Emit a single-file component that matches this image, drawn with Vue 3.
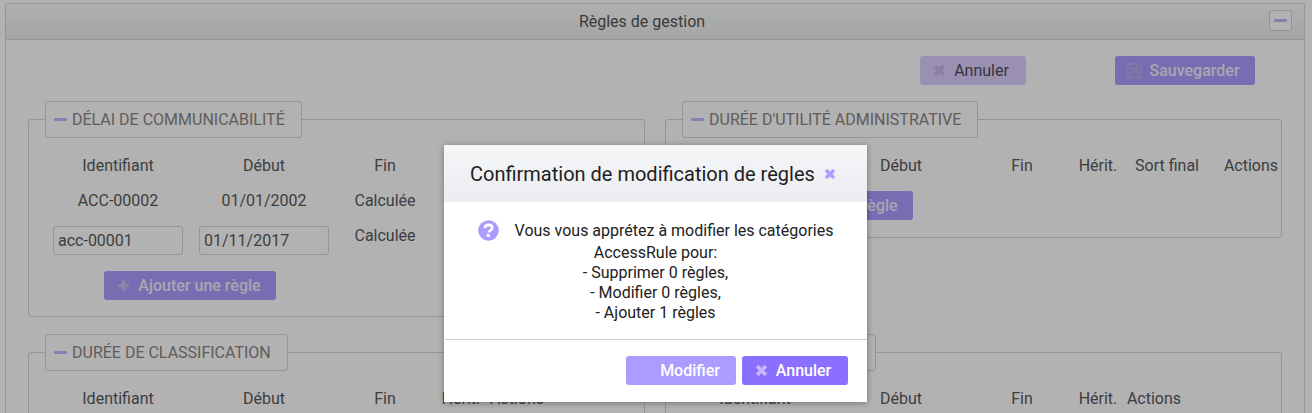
<script setup>
const leftCols = ['Identifiant', 'Début', 'Fin', 'Hérit.', 'Actions']
const dialogLines = ['AccessRule pour:', '- Supprimer 0 règles,', '- Modifier 0 règles,', '- Ajouter 1 règles']
</script>

<template>
  <div class="page">
    <section class="panel">
      <header class="panel-head">
        <span class="panel-title">Règles de gestion</span>
        <button class="collapse"><span class="dash"></span></button>
      </header>
      <div class="panel-body">
        <div class="toolbar">
          <button class="btn btn-soft">
            <svg class="ic" viewBox="0 0 12 12"><path d="M2 2l8 8M10 2l-8 8" /></svg>
            <span>Annuler</span>
          </button>
          <button class="btn btn-off btn-save">
            <svg class="floppy" viewBox="0 0 16 16"><path d="M1 1h11l3 3v11H1z" /><path d="M4 1.500v4.500h7V1.500M3.500 14.500V9h9v5.500" /></svg>
            <span>Sauvegarder</span>
          </button>
        </div>
        <div class="rules">
          <div class="group">
            <div class="legend"><span class="dash"></span>Délai de communicabilité</div>
            <div class="row cols-a head"><span>Identifiant</span><span>Début</span><span>Fin</span></div>
            <div class="row cols-a data"><span>ACC-00002</span><span>01/01/2002</span><span>Calculée</span></div>
            <div class="row cols-a edit">
              <input class="field" value="acc-00001" />
              <input class="field" value="01/11/2017" />
              <span class="calc">Calculée</span>
            </div>
            <div class="add-row cols-add">
              <button class="btn btn-off btn-add">
                <svg class="ic" viewBox="0 0 12 12"><path d="M6 1v10M1 6h10" /></svg>
                <span>Ajouter une règle</span>
              </button>
            </div>
          </div>
          <div class="group group-short">
            <div class="legend"><span class="dash"></span>Durée d'utilité administrative</div>
            <div class="row cols-b head"><span></span><span>Début</span><span>Fin</span><span>Hérit.</span><span>Sort final</span><span>Actions</span></div>
            <div class="add-row add-tight">
              <button class="btn btn-off btn-add">
                <svg class="ic" viewBox="0 0 12 12"><path d="M6 1v10M1 6h10" /></svg>
                <span>Ajouter une règle</span>
              </button>
            </div>
          </div>
          <div class="group">
            <div class="legend"><span class="dash"></span>Durée de classification</div>
            <div class="row cols-a head"><span v-for="c in leftCols" :key="c">{{ c }}</span></div>
          </div>
          <div class="group">
            <div class="legend legend-narrow"><span class="dash"></span>Durée de diffusion</div>
            <div class="row cols-a head"><span v-for="c in leftCols" :key="c">{{ c }}</span></div>
          </div>
        </div>
      </div>
    </section>

    <div class="overlay">
      <div class="dialog">
        <div class="dlg-head">
          <span>Confirmation de modification de règles</span>
          <svg class="dlg-close" viewBox="0 0 12 12"><path d="M2 2l8 8M10 2l-8 8" /></svg>
        </div>
        <div class="dlg-body">
          <p class="first">
            <svg class="help" viewBox="0 0 22 22">
              <circle cx="11" cy="11" r="10.800" fill="#ab9dff" />
              <path d="M7.300 8.600c0-2.200 1.600-3.500 3.800-3.500 2.100 0 3.700 1.300 3.700 3.100 0 1.500-.9 2.300-2 3-.8.500-1.200 1-1.200 2" fill="none" stroke="#fff" stroke-width="2.800" />
              <rect x="9.200" y="14.700" width="3.200" height="3" fill="#fff" />
            </svg>
            <span>Vous vous apprétez à modifier les catégories</span>
          </p>
          <p v-for="l in dialogLines" :key="l">{{ l }}</p>
        </div>
        <div class="dlg-foot">
          <button class="btn dlg-btn dlg-mod">Modifier</button>
          <button class="btn dlg-btn dlg-cancel">
            <svg class="ic" viewBox="0 0 12 12"><path d="M2 2l8 8M10 2l-8 8" /></svg>
            <span>Annuler</span>
          </button>
        </div>
      </div>
    </div>
  </div>
</template>

<style>
html, body { margin: 0; height: 100%; overflow: hidden; background: #fff; }
</style>

<style scoped>
.page {
  position: relative;
  height: 413px;
  overflow: hidden;
  padding: 3px 7px 0 5px;
  box-sizing: border-box;
  font-family: Roboto, "Liberation Sans", sans-serif;
  font-size: 16px;
  color: #5a5a5a;
}
p { margin: 0; }
button { font-family: inherit; }

.panel { border: 1px solid #d4d4d4; border-bottom: 0; border-radius: 3px 3px 0 0; height: 420px; }
.panel-head {
  height: 35px;
  border-bottom: 1px solid #d8d8d8;
  background: linear-gradient(#fbfbfb, #eceded);
  display: flex;
  align-items: center;
  justify-content: center;
  position: relative;
  color: #555;
}
.panel-title { margin-right: 26px; }
.collapse {
  position: absolute;
  right: 12px;
  top: 6px;
  width: 23px;
  height: 21px;
  padding: 0;
  display: flex;
  align-items: center;
  justify-content: center;
  background: #fff;
  border: 1px solid #d2d2d2;
  border-radius: 3px;
}
.dash { display: block; width: 13px; height: 3px; background: #c4b8ff; border-radius: 1px; }

.panel-body { padding: 16px 22px 0 22px; }
.toolbar { display: flex; justify-content: flex-end; padding-right: 27px; gap: 89px; height: 29px; }
.btn {
  display: inline-flex;
  align-items: center;
  justify-content: center;
  box-sizing: border-box;
  height: 29px;
  border: 0;
  border-radius: 3px;
  padding: 0;
  font-size: 16px;
  font-weight: 500;
  color: #fff;
}
.ic { width: 13px; height: 13px; fill: none; stroke: currentColor; stroke-width: 3.400; margin-right: 8px; }
.btn-soft { width: 106px; padding-right: 4px; background: #ddd0ff; color: #4f4b5c; font-weight: 400; }
.btn-soft .ic { color: #c5b8f0; }
.btn-off { background: #ab9dff; color: #f2eefc; }
.btn-off .ic { color: #c6bcf5; }
.btn-save { width: 140px; padding-right: 4px; }
.floppy { width: 16px; height: 16px; margin-right: 7px; fill: none; stroke: #bdb2f0; stroke-width: 1.300; }
.btn-add { width: 172px; padding-right: 2px; }

.rules {
  display: grid;
  grid-template-columns: 617px 617px;
  column-gap: 20px;
  margin-top: 34px;
  row-gap: 35px;
  align-items: start;
}
.group {
  border: 1px solid #d6d6d6;
  border-radius: 3px;
  padding: 0 16px 16px;
  min-height: 197px;
  box-sizing: border-box;
}
.group-short { min-height: 119px; height: 119px; padding-bottom: 0; }
.legend {
  margin: -19px 0 0;
  height: 37px;
  box-sizing: border-box;
  width: fit-content;
  display: flex;
  align-items: center;
  gap: 5px;
  padding: 0 16px 0 8px;
  border: 1px solid #d6d6d6;
  border-radius: 3px;
  background: #fff;
  font-size: 16px;
  text-transform: uppercase;
  color: #8a8583;
}
.legend-narrow { padding-right: 10px; }
.row { display: grid; text-align: center; }
.cols-a { grid-template-columns: 146px 146px 96px 56px 56px; }
.cols-b { grid-template-columns: 146px 146px 96px 56px 82px 86px; }
.head { margin-top: 19px; line-height: 18px; }
.data { margin-top: 17px; line-height: 18px; }
.edit { margin-top: 16px; justify-items: center; align-items: start; }
.field {
  width: 130px;
  height: 29px;
  box-sizing: border-box;
  border: 1px solid #d6d6d6;
  border-radius: 3px;
  padding: 0 4px;
  font: 16px Roboto, sans-serif;
  color: #5a5a5a;
  background: #fff;
}
.calc { line-height: 18px; padding-top: 1px; }
.add-row { margin-top: 16px; padding-left: 59px; }
.add-tight { margin-top: 16px; }

.overlay { position: absolute; inset: 0; background: rgba(0, 0, 0, .3); }
.dialog {
  position: absolute;
  left: 444px;
  top: 145px;
  width: 423px;
  height: 257px;
  box-sizing: border-box;
  background: #fff;
  box-shadow: 0 1px 6px rgba(0, 0, 0, .35);
  display: flex;
  flex-direction: column;
  color: #212121;
}
.dlg-head {
  height: 57px;
  flex: none;
  display: flex;
  align-items: center;
  gap: 9px;
  padding-left: 26px;
  background: linear-gradient(#f5f6f8, #ecedf0);
  font-size: 20px;
}
.dlg-close { width: 12px; height: 12px; fill: none; stroke: #ab9dff; stroke-width: 3.400; }
.dlg-body {
  flex: 1;
  padding-top: 18px;
  text-align: center;
  font-size: 16px;
  line-height: 20px;
}
.first { height: 23px; display: flex; justify-content: center; align-items: flex-start; gap: 16px; line-height: 21px; }
.help { width: 21px; height: 21px; flex: none; }
.dlg-foot {
  flex: none;
  height: 63px;
  box-sizing: border-box;
  border-top: 1px solid #ccc;
  margin-left: 1px;
  display: flex;
  justify-content: flex-end;
  gap: 6px;
  padding: 16px 19px 0 0;
}
.dlg-btn { color: #fff; }
.dlg-mod { width: 110px; background: #ab9dff; padding-left: 18px; }
.dlg-cancel { width: 106px; padding-right: 4px; background: #8b6fff; }
.dlg-cancel .ic { color: #c6b9ff; }
</style>
